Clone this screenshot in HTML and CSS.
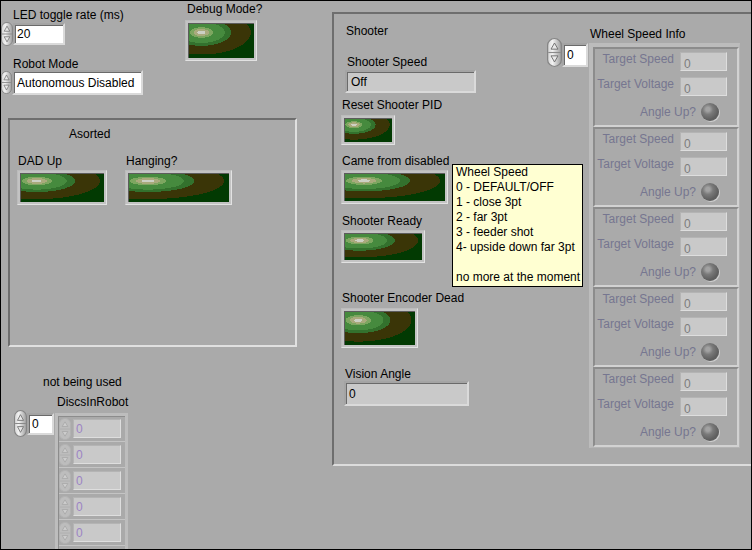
FILE: index.html
```html
<!DOCTYPE html>
<html>
<head>
<meta charset="utf-8">
<title>Front Panel</title>
<link rel="stylesheet" href="styles.css">
</head>
<body>
<div class="panel">
  <svg class="defs" aria-hidden="true">
    <defs>
      <linearGradient id="sg" x1="0" y1="0" x2="1" y2="0">
        <stop offset="0" stop-color="#d4d4d4"/>
        <stop offset="0.35" stop-color="#f2f2f2"/>
        <stop offset="1" stop-color="#9c9c9c"/>
      </linearGradient>
      <symbol id="spin" viewBox="0 0 12 26" preserveAspectRatio="none">
        <rect x="0.5" y="0.5" width="11" height="25" rx="5.5" ry="6" fill="url(#sg)" stroke="#858585"/>
        <path d="M1 13 H11" stroke="#8a8a8a" fill="none"/>
        <path d="M6 4.5 L8.8 10 H3.2 Z" fill="#e8e8e8" stroke="#6e6e6e" stroke-width="0.8"/>
        <path d="M3.2 16 H8.8 L6 21.5 Z" fill="#e8e8e8" stroke="#6e6e6e" stroke-width="0.8"/>
      </symbol>
      <symbol id="spind" viewBox="0 0 12 26" preserveAspectRatio="none">
        <rect x="0.5" y="0.5" width="11" height="25" rx="5.5" ry="6" fill="#bdbdbd" stroke="#b2b2b2"/>
        <path d="M1 13 H11" stroke="#b0b0b0" fill="none"/>
        <path d="M6 4.5 L8.8 10 H3.2 Z" fill="#cdcdcd" stroke="#a4a4a4" stroke-width="0.8"/>
        <path d="M3.2 16 H8.8 L6 21.5 Z" fill="#cdcdcd" stroke="#a4a4a4" stroke-width="0.8"/>
      </symbol>
    </defs>
  </svg>

  <div class="item g-rate">
    <div class="lbl ml12">LED toggle rate (ms)</div>
    <div class="ctl">
      <svg class="spin sp-rate"><use href="#spin" width="100%" height="100%"/></svg>
      <div class="numbox box-rate">20</div>
    </div>
  </div>

  <div class="item g-robot">
    <div class="lbl ml12">Robot Mode</div>
    <div class="ctl ctl-ring">
      <svg class="spin sp-ring"><use href="#spin" width="100%" height="100%"/></svg>
      <div class="numbox box-ring">Autonomous Disabled</div>
    </div>
  </div>

  <div class="item g-debug">
    <div class="lbl ml2">Debug Mode?</div>
    <div class="led led-debug"><i></i></div>
  </div>

  <div class="item asorted">
    <div class="lbl asorted-title">Asorted</div>
    <div class="led-row">
      <div class="led-item">
        <div class="lbl ml1">DAD Up</div>
        <div class="led led-dad"><i></i></div>
      </div>
      <div class="led-item">
        <div class="lbl ml1">Hanging?</div>
        <div class="led led-hang"><i></i></div>
      </div>
    </div>
  </div>

  <div class="item g-discs">
    <div class="lbl ml29">not being used</div>
    <div class="lbl discs-title">DiscsInRobot</div>
    <div class="ctl discs-row">
      <svg class="spin sp-idx"><use href="#spin" width="100%" height="100%"/></svg>
      <div class="numbox box-idx">0</div>
      <div class="arr arr-discs">
        <div class="del"><svg class="spin sp-d"><use href="#spind" width="100%" height="100%"/></svg><div class="dbox dbox-disc">0</div></div>
        <div class="del"><svg class="spin sp-d"><use href="#spind" width="100%" height="100%"/></svg><div class="dbox dbox-disc">0</div></div>
        <div class="del"><svg class="spin sp-d"><use href="#spind" width="100%" height="100%"/></svg><div class="dbox dbox-disc">0</div></div>
        <div class="del"><svg class="spin sp-d"><use href="#spind" width="100%" height="100%"/></svg><div class="dbox dbox-disc">0</div></div>
        <div class="del"><svg class="spin sp-d"><use href="#spind" width="100%" height="100%"/></svg><div class="dbox dbox-disc">0</div></div>
      </div>
    </div>
  </div>

  <div class="item shooter">
    <div class="shooter-col">
      <div class="lbl s-title">Shooter</div>
      <div class="lbl s-speed-l">Shooter Speed</div>
      <div class="numbox ind s-speed">Off</div>
      <div class="lbl s-reset-l">Reset Shooter PID</div>
      <div class="led s-reset"><i></i></div>
      <div class="lbl s-came-l">Came from disabled</div>
      <div class="led s-came"><i></i></div>
      <div class="lbl s-ready-l">Shooter Ready</div>
      <div class="led s-ready"><i></i></div>
      <div class="lbl s-enc-l">Shooter Encoder Dead</div>
      <div class="led s-enc"><i></i></div>
      <div class="lbl s-vis-l">Vision Angle</div>
      <div class="numbox ind s-vis">0</div>
    </div>

    <div class="wheel">
      <div class="lbl ml43">Wheel Speed Info</div>
      <div class="ctl wheel-row">
        <svg class="spin sp-widx"><use href="#spin" width="100%" height="100%"/></svg>
        <div class="numbox box-widx">0</div>
        <div class="arr arr-wheel">
          <div class="wel">
            <div class="wl">Target Speed</div><div class="dbox">0</div>
            <div class="wl">Target Voltage</div><div class="dbox">0</div>
            <div class="r3"><span class="wl">Angle Up?</span><span class="rled"></span></div>
          </div>
          <div class="wel">
            <div class="wl">Target Speed</div><div class="dbox">0</div>
            <div class="wl">Target Voltage</div><div class="dbox">0</div>
            <div class="r3"><span class="wl">Angle Up?</span><span class="rled"></span></div>
          </div>
          <div class="wel">
            <div class="wl">Target Speed</div><div class="dbox">0</div>
            <div class="wl">Target Voltage</div><div class="dbox">0</div>
            <div class="r3"><span class="wl">Angle Up?</span><span class="rled"></span></div>
          </div>
          <div class="wel">
            <div class="wl">Target Speed</div><div class="dbox">0</div>
            <div class="wl">Target Voltage</div><div class="dbox">0</div>
            <div class="r3"><span class="wl">Angle Up?</span><span class="rled"></span></div>
          </div>
          <div class="wel">
            <div class="wl">Target Speed</div><div class="dbox">0</div>
            <div class="wl">Target Voltage</div><div class="dbox">0</div>
            <div class="r3"><span class="wl">Angle Up?</span><span class="rled"></span></div>
          </div>
        </div>
      </div>
    </div>
  </div>

  <div class="tip">
    <div>Wheel Speed</div>
    <div>0 - DEFAULT/OFF</div>
    <div>1 - close 3pt</div>
    <div>2 - far 3pt</div>
    <div>3 - feeder shot</div>
    <div>4- upside down far 3pt</div>
    <div class="tip-blank"></div>
    <div>no more at the moment</div>
  </div>
</div>
</body>
</html>
```

FILE: styles.css
```css
body {
  margin: 0;
  background: #aaaaaa;
}

.panel {
  position: relative;
  width: 752px;
  height: 550px;
  overflow: hidden;
  background: #aaaaaa;
  font-family: "Liberation Sans", Arial, sans-serif;
  font-size: 12px;
  color: #000;
}

.panel::after {
  content: "";
  position: absolute;
  inset: 0;
  border: 1px solid #000;
  pointer-events: none;
  z-index: 10;
}

.defs {
  position: absolute;
  width: 0;
  height: 0;
  overflow: hidden;
}

.item {
  position: absolute;
  display: flex;
  flex-direction: column;
  align-items: flex-start;
}

.lbl {
  line-height: 14px;
  height: 14px;
  white-space: nowrap;
}

.ml1 { margin-left: 1px; }
.ml2 { margin-left: 2px; }
.ml12 { margin-left: 12px; }
.ml29 { margin-left: 29px; }
.ml43 { margin-left: 43px; }

/* controls */
.ctl {
  display: flex;
  align-items: flex-start;
}

.spin {
  display: block;
  flex: none;
}

.sp-rate { width: 12px; height: 24px; }
.sp-ring { width: 11px; height: 23px; margin-top: 1px; }
.sp-idx { width: 13px; height: 27px; margin-top: -3px; }
.sp-widx { width: 15px; height: 29px; margin-top: -5px; }
.sp-d { width: 12px; height: 22px; margin-top: -1px; }

.numbox {
  box-sizing: border-box;
  flex: none;
  display: flex;
  align-items: center;
  background: #fff;
  border: 2px solid;
  border-color: #a4a4a4 #dadada #dadada #a4a4a4;
  box-shadow: inset 1px 1px 0 #6a6a6a;
  padding-left: 2px;
  white-space: nowrap;
}

.numbox.ind {
  background: #c9c9c9;
}

.box-rate { width: 52px; height: 22px; margin-top: 1px; }
.ctl-ring { margin-top: -1px; }
.box-ring { width: 131px; height: 25px; padding-left: 3px; }
.box-idx { width: 27px; height: 22px; padding-left: 3px; }
.box-widx { width: 26px; height: 24px; padding-left: 3px; }

/* LED booleans */
.led {
  box-sizing: border-box;
  flex: none;
  border: 1px solid;
  border-color: #bcbcbc #e2e2e2 #e2e2e2 #bcbcbc;
  background: #c3c3c3;
  padding: 2px;
}

.led > i {
  display: block;
  width: 100%;
  height: 100%;
  box-sizing: border-box;
  border-top: 1px solid #5c5c5c;
  border-left: 1px solid #5c5c5c;
  background: radial-gradient(ellipse 100% 85% at 19% 25%,
    #cdd0c4 0 6%,
    #a9aa7c 6% 12%,
    #7da660 12% 18%,
    #468a3e 18% 36%,
    #33712d 36% 46%,
    #3a3507 46% 76%,
    #023a02 76%);
}

/* top left */
.g-rate { left: 1px; top: 8px; }
.g-robot { left: 1px; top: 57px; }
.g-debug { left: 185px; top: 2px; }
.led-debug { width: 72px; height: 41px; margin-top: 4px; }

/* Asorted cluster */
.asorted {
  left: 8px;
  top: 118px;
  width: 289px;
  height: 229px;
  box-sizing: border-box;
  border: 2px solid;
  border-color: #6e6e6e #e0e0e0 #e0e0e0 #6e6e6e;
}

.asorted-title { margin: 7px 0 0 59px; }

.led-row {
  display: flex;
  gap: 18px;
  margin: 13px 0 0 7px;
}

.led-item {
  display: flex;
  flex-direction: column;
  align-items: flex-start;
}

.led-item .led { margin-top: 2px; }
.led-dad { width: 90px; height: 35px; }
.led-hang { width: 107px; height: 35px; }

/* DiscsInRobot */
.g-discs { left: 14px; top: 375px; }
.discs-title { margin: 6px 0 0 43px; }
.discs-row { margin-top: 4px; }

.arr {
  box-sizing: border-box;
  flex: none;
}

.arr-discs {
  width: 73px;
  height: 145px;
  margin-left: 1px;
  border: 3px solid #bdbdbd;
  box-shadow: inset 1px 1px 0 #8c8c8c;
  padding-left: 1px;
}

.del {
  box-sizing: border-box;
  height: 26px;
  display: flex;
  align-items: flex-start;
  gap: 2px;
  padding-top: 3px;
  border-bottom: 1px solid #c4c4c4;
}

.dbox {
  box-sizing: border-box;
  background: #c9c9c9;
  border: 1px solid;
  border-color: #b4b4b4 #dedede #dedede #b4b4b4;
  color: #7d7d7d;
  padding: 4px 0 0 3px;
  line-height: 14px;
  white-space: nowrap;
}

.dbox-disc {
  width: 48px;
  height: 19px;
  padding: 2px 0 0 2px;
  color: #9c84c4;
}

/* Shooter cluster */
.shooter {
  left: 332px;
  top: 12px;
  width: 430px;
  height: 454px;
  box-sizing: border-box;
  flex-direction: row;
  border: 2px solid;
  border-color: #6e6e6e #dcdcdc #dcdcdc #6e6e6e;
}

.shooter-col {
  width: 213px;
  flex: none;
  display: flex;
  flex-direction: column;
  align-items: flex-start;
}

.s-title { margin: 10px 0 0 12px; }
.s-speed-l { margin: 17px 0 0 13px; }
.s-speed { width: 131px; height: 23px; margin: 1px 0 0 11px; padding-left: 4px; }
.s-reset-l { margin: 5px 0 0 8px; }
.s-reset { width: 54px; height: 30px; margin: 3px 0 0 7px; }
.s-came-l { margin: 9px 0 0 8px; }
.s-came { width: 107px; height: 34px; margin: 2px 0 0 7px; }
.s-ready-l { margin: 10px 0 0 8px; }
.s-ready { width: 84px; height: 33px; margin: 2px 0 0 7px; }
.s-enc-l { margin: 28px 0 0 8px; }
.s-enc { width: 77px; height: 40px; margin: 3px 0 0 7px; }
.s-vis-l { margin: 19px 0 0 11px; }
.s-vis { width: 125px; height: 25px; margin: 0 0 0 10px; padding-left: 3px; }

/* Wheel speed array */
.wheel {
  flex: none;
  display: flex;
  flex-direction: column;
  align-items: flex-start;
  margin-top: 13px;
}

.wheel-row { margin-top: 2px; }

.arr-wheel {
  width: 151px;
  height: 405px;
  margin-left: 1px;
  border-style: solid;
  border-width: 4px 1px 1px 4px;
  border-color: #bcbcbc #b4b4b4 #b4b4b4 #bcbcbc;
}

.wel {
  box-sizing: border-box;
  height: 80px;
  border: 2px solid;
  border-color: #8c8c8c #d2d2d2 #d2d2d2 #8c8c8c;
  padding: 3px 10px 4px 0;
  display: grid;
  grid-template-columns: 1fr 47px;
  grid-template-rows: 19px 19px 19px;
  column-gap: 6px;
  row-gap: 6px;
}

.wl {
  text-align: right;
  line-height: 14px;
  color: #767690;
  white-space: nowrap;
}

.r3 {
  grid-column: 1 / 3;
  display: flex;
  justify-content: flex-end;
  align-items: center;
  gap: 5px;
  padding-right: 8px;
}

.rled {
  display: block;
  width: 18px;
  height: 18px;
  border-radius: 50%;
  background: radial-gradient(circle at 38% 35%, #a2a2a2 0 12%, #7a7a7a 32%, #5e5e5e 66%, #6c6c6c);
  box-shadow: 1px 1px 0 #cfcfcf;
}

/* tooltip */
.tip {
  position: absolute;
  left: 452px;
  top: 164px;
  width: 131px;
  height: 123px;
  box-sizing: border-box;
  background: #ffffd2;
  border: 1px solid #000;
  padding: 0 0 0 3px;
  line-height: 15px;
  white-space: nowrap;
  z-index: 5;
}

.tip-blank { height: 15px; }
```
